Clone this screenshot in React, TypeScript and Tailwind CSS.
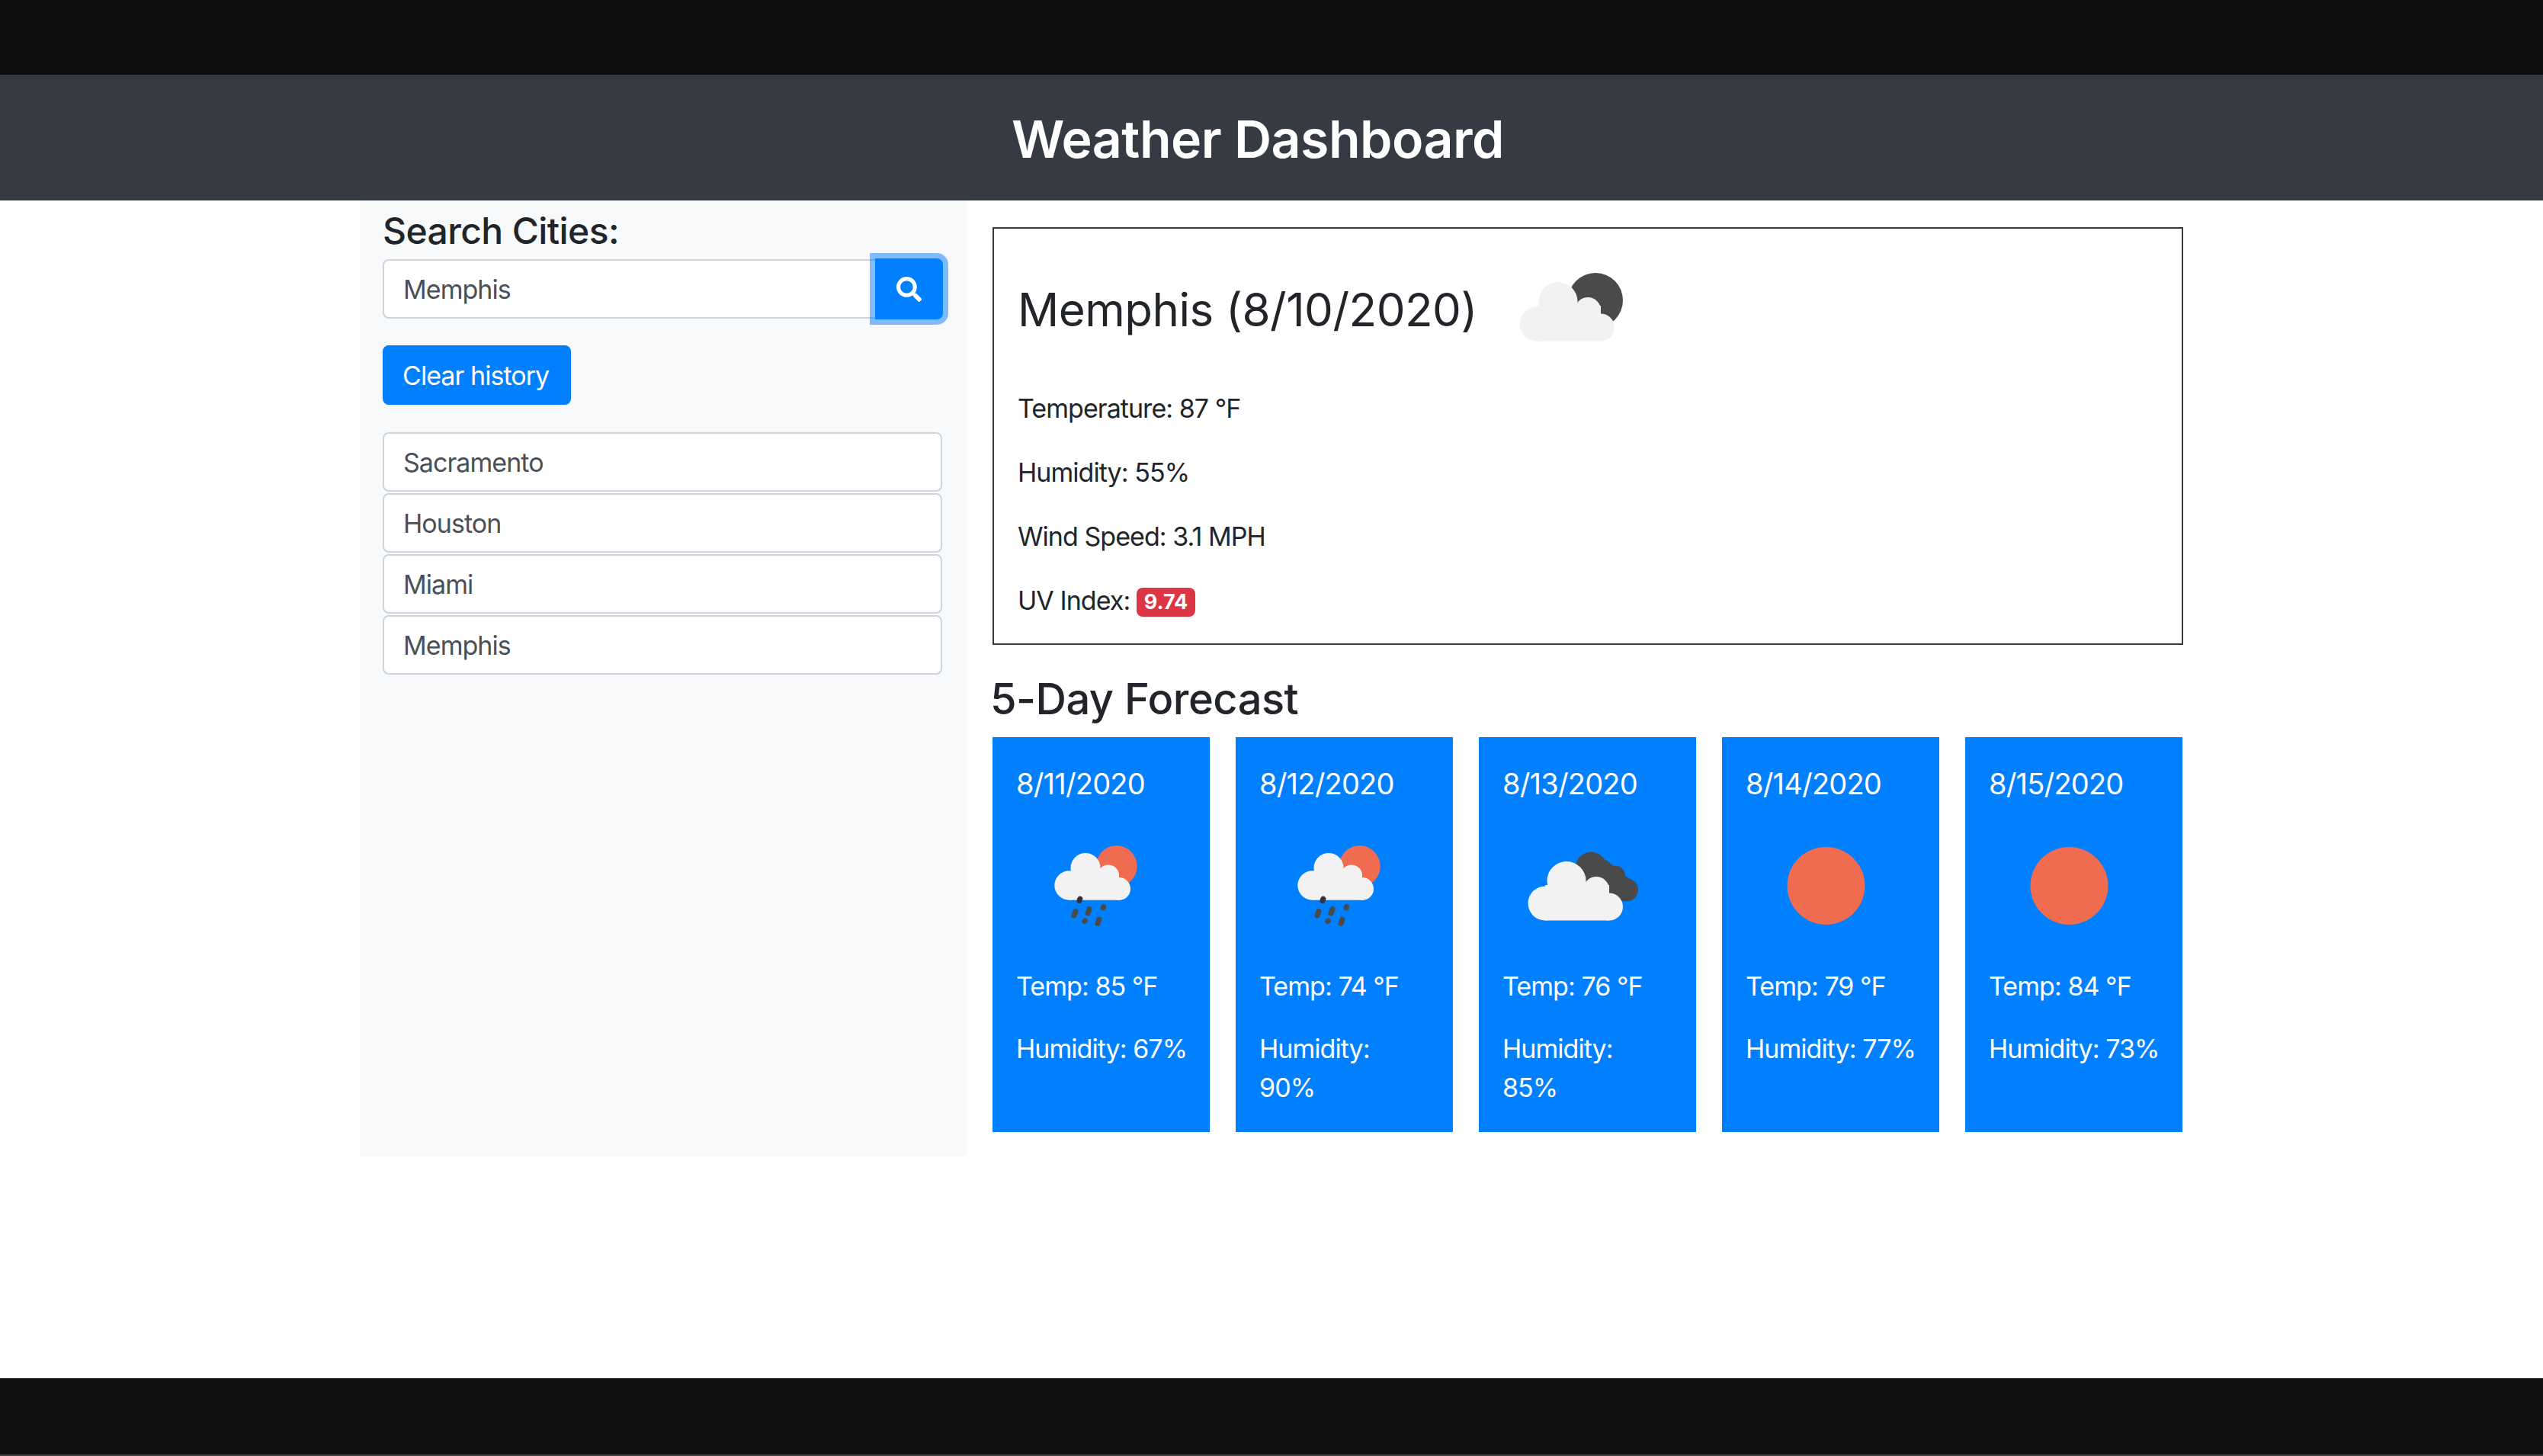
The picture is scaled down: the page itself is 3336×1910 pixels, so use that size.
import React from "react";
import { FaSearch } from "react-icons/fa";

type IconKind = "rain" | "clouds" | "clear";

const history = ["Sacramento", "Houston", "Miami", "Memphis"];

const forecast: { date: string; temp: number; humidity: number; icon: IconKind; wrap?: boolean }[] = [
  { date: "8/11/2020", temp: 85, humidity: 67, icon: "rain" },
  { date: "8/12/2020", temp: 74, humidity: 90, icon: "rain", wrap: true },
  { date: "8/13/2020", temp: 76, humidity: 85, icon: "clouds", wrap: true },
  { date: "8/14/2020", temp: 79, humidity: 77, icon: "clear" },
  { date: "8/15/2020", temp: 84, humidity: 73, icon: "clear" },
];

const CLOUD = "#f2f2f2";
const DARK = "#4a4a4a";
const SUN = "#f06c50";

function SmallCloud() {
  return (
    <g fill={CLOUD}>
      <circle cx="69.5" cy="105.5" r="19.2" />
      <circle cx="91" cy="82.5" r="19.5" />
      <circle cx="121" cy="92.5" r="14" />
      <circle cx="135" cy="110" r="15" />
      <rect x="69" y="90" width="66" height="34.7" />
    </g>
  );
}

function BigCloud() {
  return (
    <g fill={CLOUD}>
      <circle cx="56" cy="129" r="22.5" />
      <circle cx="84" cy="99.5" r="25.5" />
      <circle cx="123" cy="111" r="17" />
      <circle cx="140" cy="133.5" r="18" />
      <rect x="56" y="105" width="84" height="46.5" />
    </g>
  );
}

function WeatherIcon({ kind }: { kind: IconKind }) {
  return (
    <svg width={213} height={212} viewBox="0 0 213 212" className="block">
      {kind === "rain" && (
        <>
          <circle cx="131.7" cy="80.3" r="27" fill={SUN} />
          <SmallCloud />
          <g stroke={DARK} strokeWidth="7" strokeLinecap="round">
            <line x1="83.8" y1="123" x2="83" y2="125.5" stroke="#333" />
            <line x1="78" y1="139.5" x2="76" y2="145" />
            <line x1="96" y1="136.5" x2="94" y2="142" />
            <line x1="114.6" y1="133.5" x2="114" y2="135" />
            <line x1="90.4" y1="152" x2="89.8" y2="152.6" />
            <line x1="109" y1="150" x2="107" y2="155.5" />
          </g>
        </>
      )}
      {kind === "clouds" && (
        <>
          <g fill={DARK}>
            <circle cx="116.3" cy="82.3" r="20.7" />
            <circle cx="148" cy="92.3" r="12.7" />
            <circle cx="163" cy="111.3" r="15" />
            <polygon points="100,95 136,72 165,96 160,126 130,130" />
          </g>
          <BigCloud />
        </>
      )}
      {kind === "clear" && <circle cx="105.5" cy="106" r="51" fill={SUN} />}
    </svg>
  );
}

function MainIcon() {
  return (
    <svg width={137} height={92} viewBox="33 62 137 92" className="block">
      <circle cx="133" cy="98" r="36" fill={DARK} />
      <BigCloud />
    </svg>
  );
}

export default function App() {
  return (
    <div className="flex h-[1910px] w-full flex-col overflow-hidden bg-white font-['Inter',sans-serif] text-[34px] leading-[51px] tracking-[-0.95px] text-[#212529]">
      <div className="h-[98px] shrink-0 bg-[#0e0e0e]" />
      <header className="flex h-[165px] shrink-0 items-center justify-center bg-[#363a42] pt-[3px] pr-[36px]">
        <h1 className="text-[68px] leading-[80px] font-semibold tracking-[-0.5px] text-white">Weather Dashboard</h1>
      </header>

      <main className="mx-auto flex w-[2392px] flex-1 items-start">
        <aside className="h-[1254px] w-[796px] shrink-0 bg-[#f8f9fa] px-[30px] pt-[9px]">
          <h4 className="text-[48px] leading-[61px] font-medium tracking-[-0.6px]">Search Cities:</h4>
          <div className="mt-[6px] flex h-[80px] w-[736px] items-stretch">
            <input
              defaultValue="Memphis"
              className="h-[78px] w-[646px] self-center rounded-l-[8px] border-2 border-r-0 border-[#ced4da] bg-white px-[25px] text-[#495057] outline-none"
            />
            <button className="relative flex w-[89px] items-center justify-center rounded-r-[8px] bg-[#0080ff] text-white shadow-[0_0_0_7px_rgba(0,128,255,0.5)]">
              <FaSearch size={33} />
            </button>
          </div>
          <button className="mt-[34px] block h-[78px] w-[247px] rounded-[8px] bg-[#0080ff] pl-[26px] text-left text-white">
            Clear history
          </button>
          <ul className="mt-[36px] flex w-[734px] flex-col gap-[2px]">
            {history.map((city) => (
              <li
                key={city}
                className="flex h-[78px] items-center rounded-[8px] border-2 border-[#ced4da] bg-white px-[25px] text-[#495057]"
              >
                {city}
              </li>
            ))}
          </ul>
        </aside>

        <section className="ml-[34px] w-[1563px] pt-[35px]">
          <div className="h-[548px] border-2 border-[#343a40] px-[31px] py-[32px]">
            <div className="mb-[34px] flex h-[144px] items-center gap-[55px]">
              <h2 className="pt-[3px] text-[60px] leading-[72px] font-normal tracking-[-0.5px]">Memphis (8/10/2020)</h2>
              <MainIcon />
            </div>
            <p className="mb-[33px]">Temperature: 87 °F</p>
            <p className="mb-[33px]">Humidity: 55%</p>
            <p className="mb-[33px]">Wind Speed: 3.1 MPH</p>
            <p>
              UV Index:{" "}
              <span className="inline-block rounded-[8px] bg-[#dc3545] px-[10px] align-[1px] text-[27px] leading-[38px] font-bold tracking-normal text-white">
                9.74
              </span>
            </p>
          </div>

          <h3 className="mt-[35px] mb-[14px] -ml-[3px] text-[56px] leading-[72px] font-medium tracking-[-0.5px]">5-Day Forecast</h3>

          <div className="flex gap-[34px]">
            {forecast.map((day) => (
              <div key={day.date} className="h-[518px] w-[285px] shrink-0 bg-[#0080ff] pt-[36px] pl-[31px] text-white">
                <h5 className="mb-[2px] text-[38px] leading-[51px] font-normal tracking-[-0.8px]">{day.date}</h5>
                <WeatherIcon kind={day.icon} />
                <p className="mb-[31px]">Temp: {day.temp} °F</p>
                <p className="whitespace-nowrap">
                  Humidity:{day.wrap ? <br /> : " "}
                  {day.humidity}%
                </p>
              </div>
            ))}
          </div>
        </section>
      </main>

      <footer className="h-[102px] shrink-0 border-b-2 border-[#444] bg-[#101010]" />
    </div>
  );
}
